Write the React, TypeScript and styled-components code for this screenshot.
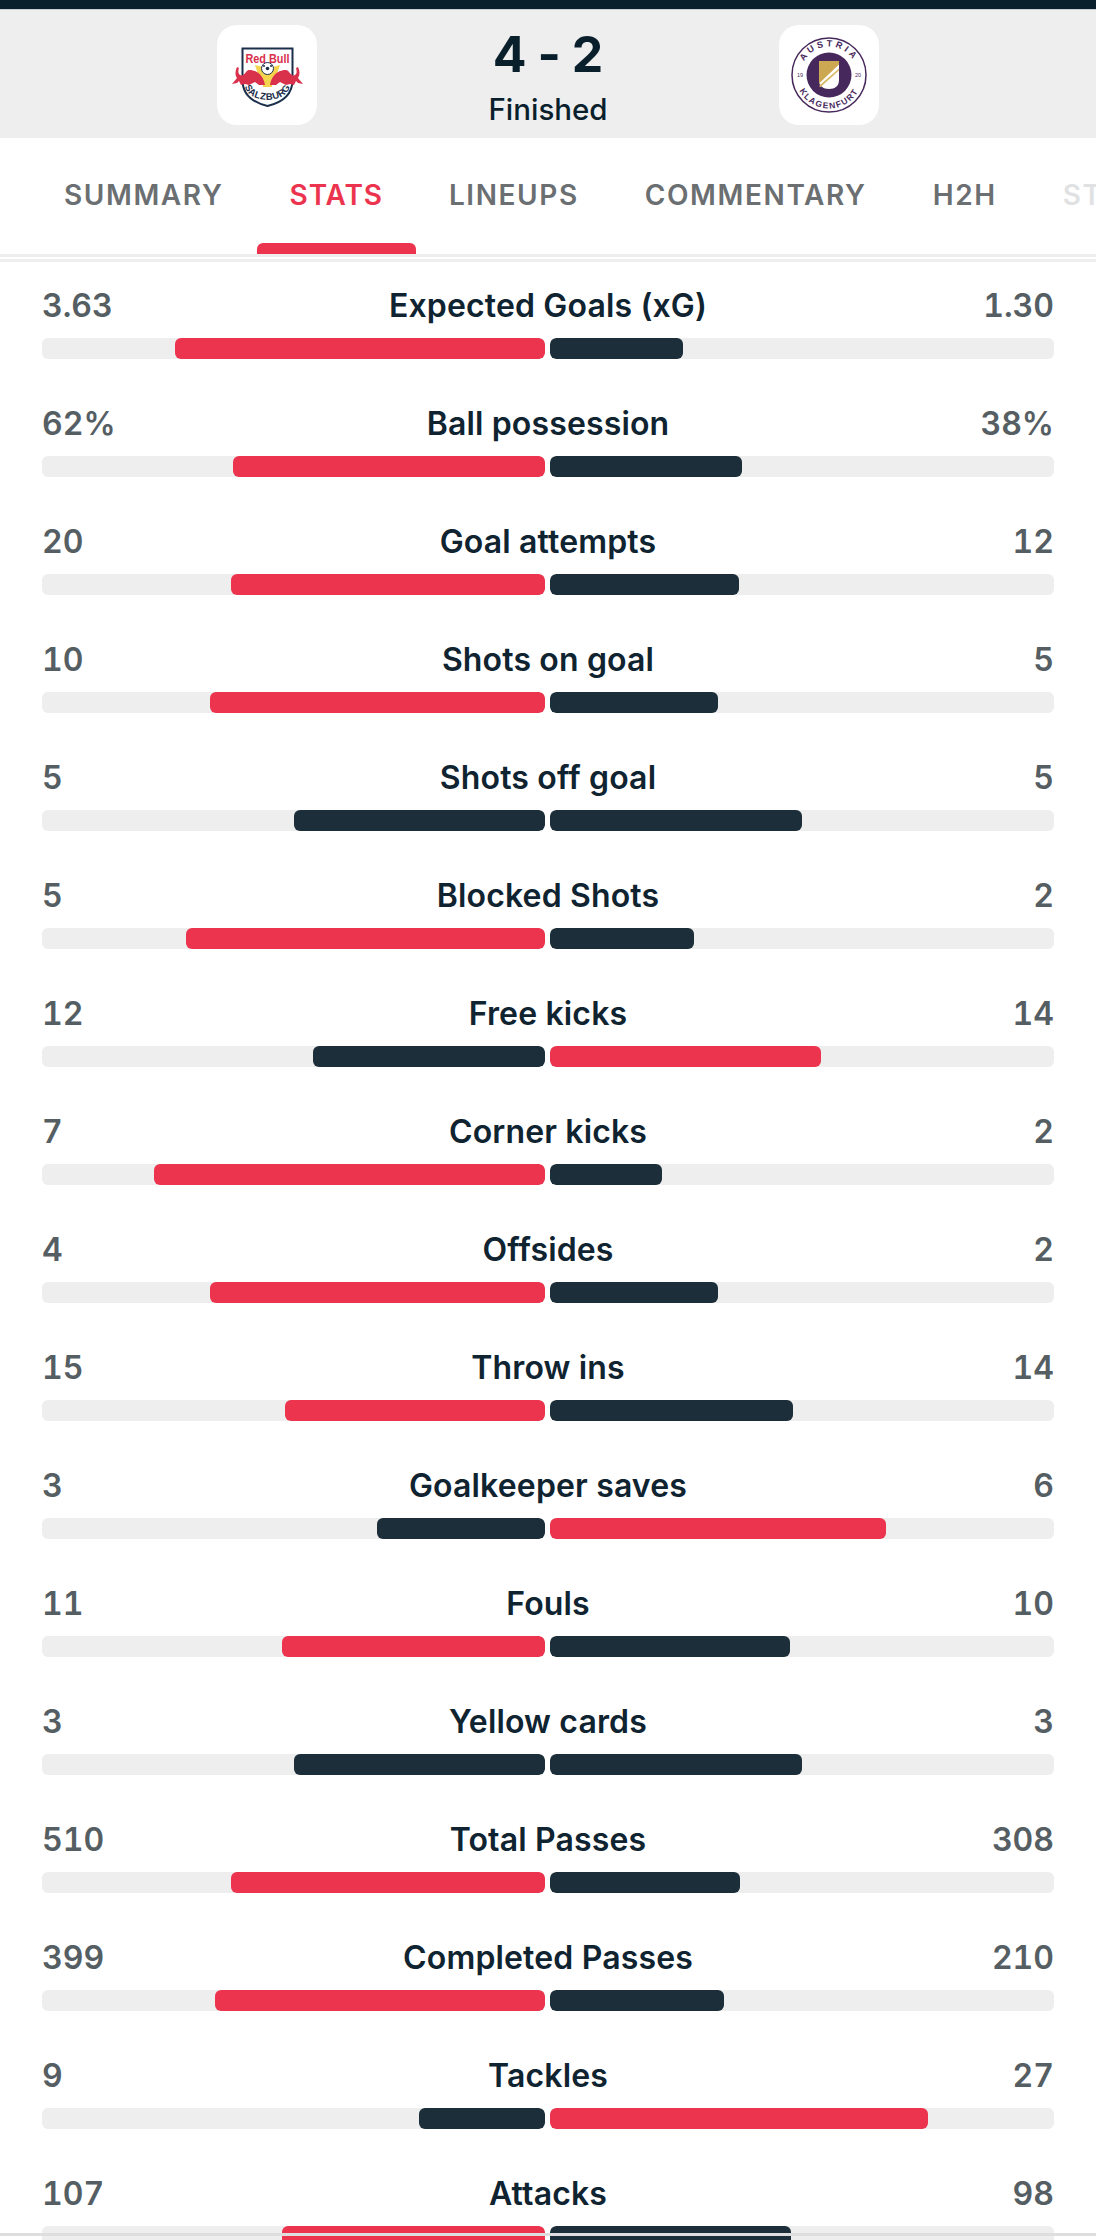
import React from "react";
import styled, { createGlobalStyle } from "styled-components";

const Global = createGlobalStyle`
  html, body { margin: 0; padding: 0; background: #fff; }
  body { font-family: "Inter", "Liberation Sans", sans-serif; height: 2240px; overflow: hidden; }
`;

const Page = styled.div`
  position: relative;
  width: 1096px;
  height: 2240px;
  overflow: hidden;
  background: #fff;
`;
const TopBar = styled.div`
  height: 9px;
  background: #0a1f2c;
  border-bottom: 1px solid #c8cdd0;
`;
const Header = styled.header`
  height: 128px;
  background: #eeeeee;
  display: grid;
  grid-template-columns: 100px 462px 100px;
  justify-content: center;
  padding-top: 15px;
  box-sizing: border-box;
`;
const Logo = styled.div`
  width: 100px;
  height: 100px;
  border-radius: 20px;
  background: #fff;
  svg { display: block; }
`;
const ScoreBox = styled.div`
  display: flex;
  flex-direction: column;
  align-items: center;
  color: #0a1f2c;
`;
const Score = styled.div`
  display: flex;
  gap: 11px;
  font-size: 50px;
  font-weight: 700;
  line-height: 50px;
  margin-top: 4px;
`;
const Status = styled.div`
  font-size: 29.5px;
  font-weight: 550;
  line-height: 36px;
  margin-top: 12px;
`;
const Tabs = styled.nav`
  height: 116px;
  display: flex;
  padding-left: 31px;
  box-sizing: border-box;
  overflow: hidden;
`;
const Tab = styled.div<{ $active?: boolean; $faded?: boolean }>`
  position: relative;
  padding: 0 33px;
  height: 116px;
  line-height: 115px;
  font-size: 28px;
  font-weight: 600;
  letter-spacing: ${(p) => (p.$active ? "0.9px" : "1.6px")};
  white-space: nowrap;
  color: ${(p) => (p.$active ? "#ec344f" : "#6b6f72")};
  opacity: ${(p) => (p.$faded ? 0.2 : 1)};
  &::after {
    content: "";
    display: ${(p) => (p.$active ? "block" : "none")};
    position: absolute;
    left: 0;
    right: 0;
    bottom: 0;
    height: 11px;
    border-radius: 6px 6px 0 0;
    background: #ec344f;
  }
`;
const Rule = styled.div`
  height: 3px;
  background: #eeeeee;
  margin-bottom: 2px;
`;
const List = styled.main`
  padding: 22px 42px 0;
`;
const Row = styled.section`
  height: 118px;
`;
const Line = styled.div`
  display: grid;
  grid-template-columns: 1fr auto 1fr;
  align-items: center;
  height: 52px;
  padding-bottom: 14px;
  box-sizing: border-box;
`;
const Value = styled.span<{ $end?: boolean }>`
  font-size: 32px;
  font-weight: 600;
  font-variant-numeric: tabular-nums;
  color: #555e63;
  text-align: ${(p) => (p.$end ? "right" : "left")};
`;
const Label = styled.span`
  font-size: 32px;
  font-weight: 580;
  letter-spacing: 0.15px;
  color: #0f2330;
`;
const Bars = styled.div`
  display: grid;
  grid-template-columns: 503px 504px;
  gap: 5px;
`;
const Track = styled.div<{ $end?: boolean }>`
  height: 21px;
  border-radius: 6px;
  background: #eeeeee;
  display: flex;
  overflow: hidden;
  justify-content: ${(p) => (p.$end ? "flex-end" : "flex-start")};
`;
const Fill = styled.div<{ $win: boolean }>`
  height: 100%;
  border-radius: 6px;
  background: ${(p) => (p.$win ? "#ec344f" : "#1b2e3a")};
`;
const BottomRule = styled.div`
  position: absolute;
  left: 0;
  right: 0;
  bottom: 4px;
  height: 3px;
  background: #dedede;
`;

const stats: [string, string, string][] = [
  ["3.63", "Expected Goals (xG)", "1.30"],
  ["62%", "Ball possession", "38%"],
  ["20", "Goal attempts", "12"],
  ["10", "Shots on goal", "5"],
  ["5", "Shots off goal", "5"],
  ["5", "Blocked Shots", "2"],
  ["12", "Free kicks", "14"],
  ["7", "Corner kicks", "2"],
  ["4", "Offsides", "2"],
  ["15", "Throw ins", "14"],
  ["3", "Goalkeeper saves", "6"],
  ["11", "Fouls", "10"],
  ["3", "Yellow cards", "3"],
  ["510", "Total Passes", "308"],
  ["399", "Completed Passes", "210"],
  ["9", "Tackles", "27"],
  ["107", "Attacks", "98"],
];

const SalzburgLogo = () => (
  <svg width="100" height="100" viewBox="0 0 100 100">
    <path d="M25.5 23.5H75.5V55C75.5 71 63 78 50.5 81C38 78 25.5 71 25.5 55Z" fill="#fff" stroke="#1b2e4a" strokeWidth="2" />
    <text x="50.5" y="38" textAnchor="middle" fontFamily="Liberation Sans, sans-serif" fontWeight="700" fontSize="13.5" fill="#d9304c" textLength="44" lengthAdjust="spacingAndGlyphs">Red Bull</text>
    <path d="M38 40L46 42H56L63 40L59 52L55 58V62H46V58L42 52Z" fill="#f5d44e" />
    <circle cx="50.5" cy="43.5" r="6" fill="#fff" stroke="#1b2e4a" strokeWidth="1" />
    <circle cx="50.5" cy="43.5" r="1.8" fill="#1b2e4a" />
    <circle cx="47" cy="41" r="1" fill="#1b2e4a" />
    <circle cx="54" cy="41" r="1" fill="#1b2e4a" />
    <path d="M48 60C47 53 43 48 38 46C34 45 31 44 29 47C27 50 25 51 23 50C21 49 21 46 22 43L20 42C18 46 18 50 20 53L15 59L20 58L22 56L24 60L28 59L32 60L38 57L42 60Z" fill="#d9304c" />
    <path d="M53 60C54 53 58 48 63 46C67 45 70 44 72 47C74 50 76 51 78 50C80 49 80 46 79 43L81 42C83 46 83 50 81 53L86 59L81 58L79 56L77 60L73 59L69 60L63 57L59 60Z" fill="#d9304c" />
    <path id="sz" d="M28 62C33 79 68 79 73 62" fill="none" />
    <text fontFamily="Liberation Sans, sans-serif" fontWeight="700" fontSize="9.5" fill="#1b2e4a" letterSpacing="0.4">
      <textPath href="#sz" startOffset="50%" textAnchor="middle">SALZBURG</textPath>
    </text>
  </svg>
);

const KlagenfurtLogo = () => (
  <svg width="100" height="100" viewBox="0 0 100 100">
    <circle cx="50" cy="50" r="37" fill="none" stroke="#47285c" strokeWidth="1.5" />
    <circle cx="50" cy="50" r="22.5" fill="#47285c" />
    <path id="at" d="M21.5 50A28.5 28.5 0 0 1 78.5 50" fill="none" />
    <path id="ab" d="M16.5 50A33.5 33.5 0 0 0 83.5 50" fill="none" />
    <text fontFamily="Liberation Sans, sans-serif" fontWeight="700" fontSize="9" fill="#47285c" letterSpacing="3">
      <textPath href="#at" startOffset="50%" textAnchor="middle">AUSTRIA</textPath>
    </text>
    <text fontFamily="Liberation Sans, sans-serif" fontWeight="700" fontSize="8.5" fill="#47285c" letterSpacing="1.4">
      <textPath href="#ab" startOffset="50%" textAnchor="middle">KLAGENFURT</textPath>
    </text>
    <text x="21" y="52" textAnchor="middle" fontFamily="Liberation Sans, sans-serif" fontSize="5.5" fill="#47285c">19</text>
    <text x="79" y="52" textAnchor="middle" fontFamily="Liberation Sans, sans-serif" fontSize="5.5" fill="#47285c">20</text>
    <path d="M40 36H60V55C60 61 56 64 50 64C44 64 40 61 40 55Z" fill="#fff" />
    <path d="M40 36H60V39.5L40 58.5Z" fill="#cda853" />
    <path d="M60 43.5V45.5L41 62.5L40.3 60.5Z" fill="#d8b965" />
  </svg>
);

const ratio = (a: string, b: string) => {
  const x = parseFloat(a);
  const y = parseFloat(b);
  return [(x / (x + y)) * 100, (y / (x + y)) * 100];
};

export default function App() {
  return (
    <Page>
      <Global />
      <TopBar />
      <Header>
        <Logo><SalzburgLogo /></Logo>
        <ScoreBox>
          <Score><span>4</span><span>-</span><span>2</span></Score>
          <Status>Finished</Status>
        </ScoreBox>
        <Logo><KlagenfurtLogo /></Logo>
      </Header>
      <Tabs>
        <Tab>SUMMARY</Tab>
        <Tab $active>STATS</Tab>
        <Tab>LINEUPS</Tab>
        <Tab>COMMENTARY</Tab>
        <Tab>H2H</Tab>
        <Tab $faded>STANDINGS</Tab>
      </Tabs>
      <Rule />
      <Rule />
      <List>
        {stats.map(([a, label, b]) => {
          const [l, r] = ratio(a, b);
          const tie = l === r;
          return (
            <Row key={label}>
              <Line>
                <Value>{a}</Value>
                <Label>{label}</Label>
                <Value $end>{b}</Value>
              </Line>
              <Bars>
                <Track $end><Fill $win={!tie && l > r} style={{ width: `${l}%` }} /></Track>
                <Track><Fill $win={!tie && r > l} style={{ width: `${r}%` }} /></Track>
              </Bars>
            </Row>
          );
        })}
      </List>
      <BottomRule />
    </Page>
  );
}
